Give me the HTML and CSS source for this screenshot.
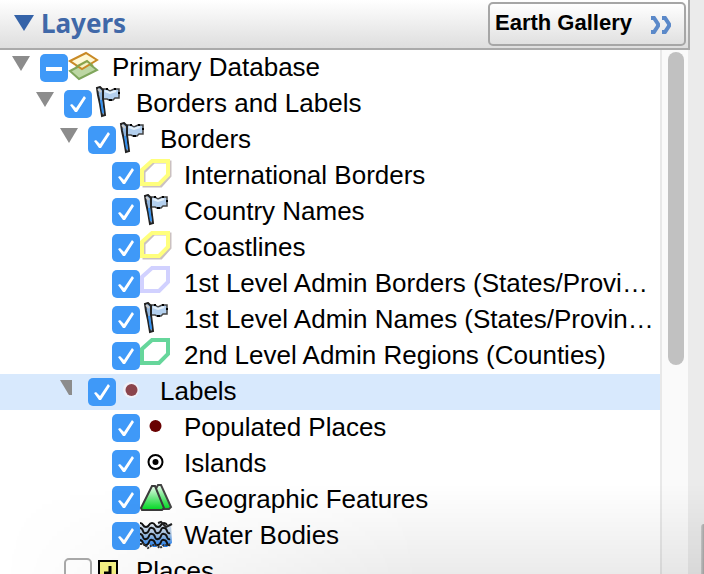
FILE: index.html
```html
<!DOCTYPE html>
<html lang="en">
<head>
<meta charset="utf-8">
<title>Layers</title>
<link rel="stylesheet" href="styles.css">
</head>
<body>
<svg class="defs" aria-hidden="true">
  <symbol id="flag" viewBox="0 0 32 32">
    <path d="M11 3h4l3 2 4-2h5v9h-4l-2 2h-4l-2-1h-4z" fill="#b4d0ee" stroke="#444" stroke-width="1.500"/>
    <path d="M13 5l5 2 6-2" fill="none" stroke="#e4f0fa" stroke-width="2"/>
    <path d="M14 3h2M22 3h2M27 6v2M17 14h3" stroke="#000" stroke-width="2"/>
    <path d="M5 2l3-1 3 3 0 9 2 16-3 1-2-12-2-9z" fill="#8fb4dc" stroke="#222" stroke-width="2"/>
    <path d="M6 3l3 3" stroke="#ccc" stroke-width="2"/>
    <path d="M9 14l2 13" stroke="#3490ee" stroke-width="2"/>
  </symbol>
  <symbol id="area" viewBox="0 0 32 32">
    <path d="M12 2H28V16L19 25H2V11Z" fill="none" stroke="currentColor" stroke-width="4"/>
  </symbol>
  <symbol id="area-shadow" viewBox="0 0 32 32">
    <path d="M14 4H30V18L21 28H4V14Z" fill="none" stroke="#cbc1c1" stroke-width="3"/>
    <path d="M12 3H28V17L19 26H2V12Z" fill="none" stroke="#ffff7d" stroke-width="4"/>
  </symbol>
  <symbol id="dot" viewBox="0 0 32 32"><circle cx="15.500" cy="16" r="6" fill="currentColor"/></symbol>
</svg>
<div class="window">
  <main class="panel">
    <header class="header">
      <h1 class="title"><svg class="title-arrow" viewBox="0 0 20 16" aria-hidden="true"><path d="M0 0H20L10 16Z" fill="#3563a8"/></svg>Layers</h1>
      <button class="gallery" type="button">Earth Gallery
        <svg class="chevrons" viewBox="0 0 22 18" aria-hidden="true"><path d="M1 2h3l4 6v2l-4 6H1M12 2h3l4 6v2l-4 6h-3" fill="none" stroke="#5b89c9" stroke-width="4"/></svg>
      </button>
    </header>
    <div class="content">
      <ul class="tree">
        <li class="row level-0"><button class="toggle" type="button" aria-label="Collapse"></button><input class="check mixed" type="checkbox" id="c0" checked>
          <svg class="icon" viewBox="0 0 32 32"><path d="M2 21L19 12L29 20L11 29Z" fill="#bdd7a4" stroke="#7fa65c" stroke-width="2"/><path d="M2 11L18 3L29 10L14 19Z" fill="#fff8cf" fill-opacity=".85" stroke="#c98a26" stroke-width="2"/><path d="M8 17L19 11L25 16" fill="none" stroke="#8aa24a" stroke-width="2"/></svg>
          <label class="name" for="c0">Primary Database</label></li>
        <li class="row level-1"><button class="toggle" type="button" aria-label="Collapse"></button><input class="check" type="checkbox" id="c1" checked><svg class="icon"><use href="#flag"/></svg><label class="name" for="c1">Borders and Labels</label></li>
        <li class="row level-2"><button class="toggle" type="button" aria-label="Collapse"></button><input class="check" type="checkbox" id="c2" checked><svg class="icon"><use href="#flag"/></svg><label class="name" for="c2">Borders</label></li>
        <li class="row level-3"><input class="check" type="checkbox" id="c3" checked><svg class="icon"><use href="#area-shadow"/></svg><label class="name" for="c3">International Borders</label></li>
        <li class="row level-3"><input class="check" type="checkbox" id="c4" checked><svg class="icon"><use href="#flag"/></svg><label class="name" for="c4">Country Names</label></li>
        <li class="row level-3"><input class="check" type="checkbox" id="c5" checked><svg class="icon"><use href="#area-shadow"/></svg><label class="name" for="c5">Coastlines</label></li>
        <li class="row level-3"><input class="check" type="checkbox" id="c6" checked><svg class="icon lilac"><use href="#area"/></svg><label class="name" for="c6">1st Level Admin Borders (States/Provinces)</label></li>
        <li class="row level-3"><input class="check" type="checkbox" id="c7" checked><svg class="icon"><use href="#flag"/></svg><label class="name" for="c7">1st Level Admin Names (States/Provinces)</label></li>
        <li class="row level-3"><input class="check" type="checkbox" id="c8" checked><svg class="icon green"><use href="#area"/></svg><label class="name" for="c8">2nd Level Admin Regions (Counties)</label></li>
        <li class="row level-2 selected"><button class="toggle turning" type="button" aria-label="Collapse"></button><input class="check" type="checkbox" id="c9" checked><svg class="icon rose" viewBox="0 0 32 32"><circle cx="15" cy="16" r="8" fill="#f0f0f8"/><use href="#dot"/></svg><label class="name" for="c9">Labels</label></li>
        <li class="row level-3"><input class="check" type="checkbox" id="c10" checked><svg class="icon maroon"><use href="#dot"/></svg><label class="name" for="c10">Populated Places</label></li>
        <li class="row level-3"><input class="check" type="checkbox" id="c11" checked><svg class="icon" viewBox="0 0 32 32"><circle cx="15.500" cy="16" r="7" fill="#fff" stroke="#000" stroke-width="2"/><circle cx="15.500" cy="16" r="3" fill="#000"/></svg><label class="name" for="c11">Islands</label></li>
        <li class="row level-3"><input class="check" type="checkbox" id="c12" checked>
          <svg class="icon" viewBox="0 0 32 32"><defs><linearGradient id="hill" x1="0" y1="0" x2="0" y2="1"><stop offset="0" stop-color="#effff0"/><stop offset=".5" stop-color="#6ee783"/><stop offset="1" stop-color="#00db22"/></linearGradient></defs><path d="M13 12L18 3H21L31 25L29 27H18Z" fill="url(#hill)" stroke="#444" stroke-width="2"/><path d="M1 26L12 4H15L24 26L22 28H2Z" fill="url(#hill)" stroke="#3c3c3c" stroke-width="2"/></svg>
          <label class="name" for="c12">Geographic Features</label></li>
        <li class="row level-3"><input class="check" type="checkbox" id="c13" checked>
          <svg class="icon" viewBox="0 0 32 32"><defs><linearGradient id="sea" x1="0" y1="0" x2="0" y2="1"><stop offset="0" stop-color="#dfe6ee"/><stop offset=".45" stop-color="#a9c4e2"/><stop offset="1" stop-color="#1b7cf0"/></linearGradient></defs><path d="M0 6l5 3 5-4 5 3 5-3 6 3 5-3 1 20-5 4h-3l-4-3-4 3h-3l-4-3-3 3H8l-4-4-4-1Z" fill="url(#sea)"/><path d="M0 5q2 0 3 2t3 2q2 0 3-2t3-2q2 0 3 2t3 2q2 0 3-2t3-2q2 0 3 2M0 10q2 0 3 3t3 2q2 0 3-3t3-2q2 0 3 3t3 2q2 0 3-3t3-2q2 0 3 3t3 2M0 16q2 0 3 3t3 2q2 0 3-3t3-2q2 0 3 3t3 2q2 0 3-3t3-2q2 0 3 3t3 2M0 22q2 0 3 3t3 2q2 0 3-3t3-2q2 0 3 3t3 2q2 0 3-3t3-2q2 0 3 3t3 2" fill="none" stroke="#111" stroke-width="2"/><path d="M0 26l4 0 4 4 4-3 4 0 4 3 4-3 4 0 3-1" fill="none" stroke="#333" stroke-width="2" stroke-dasharray="2 1"/><path d="M18 5l3-1 5 5 6-3" fill="none" stroke="#222" stroke-width="2"/></svg>
          <label class="name" for="c13">Water Bodies</label></li>
        <li class="row level-1 leaf"><input class="check" type="checkbox" id="c14">
          <svg class="icon" viewBox="0 0 32 32"><path d="M7 7H25V29H7Z" fill="#f6f485" stroke="#000" stroke-width="2"/><path d="M18 12V19H12" fill="none" stroke="#000" stroke-width="3"/></svg>
          <label class="name" for="c14">Places</label></li>
      </ul>
      <div class="track"><div class="thumb"></div></div>
    </div>
  </main>
</div>
</body>
</html>
```
FILE: styles.css
```css
* { box-sizing: border-box; }

body {
  margin: 0;
  background: #ebebeb;
  color: #000;
  font: 26px/34px "Liberation Sans", Arial, sans-serif;
}

.defs { position: absolute; width: 0; height: 0; }

.window {
  position: relative;
  height: 100vh;
  padding-right: 14px;
  overflow: hidden;
}

/* soft shade along the lower edge of the window */
.window::before {
  content: "";
  position: absolute;
  inset: auto 0 0 0;
  height: 90px;
  background: linear-gradient(to top, rgba(0, 0, 0, .08), transparent);
  mask-image: linear-gradient(to right, transparent, #000 60%);
  pointer-events: none;
  z-index: 1;
}

/* edge of the neighbouring window */
.window::after {
  content: "";
  position: absolute;
  right: 0;
  bottom: 0;
  width: 3px;
  height: 50px;
  border-radius: 3px 0 0 0;
  background: linear-gradient(to right, #ccc, #aaa);
}

.panel { display: flex; flex-direction: column; height: 100%; }

.header {
  display: flex;
  flex: none;
  align-items: flex-start;
  justify-content: space-between;
  height: 50px;
  padding: 2px 0 0 14px;
  border-right: 2px solid #aaa;
  border-bottom: 2px solid #aaa;
  background: linear-gradient(#fff, #dedede);
}

.title {
  display: flex;
  align-items: center;
  gap: 7px;
  margin: 0;
  color: #4068a8;
  font: bold 26px/42px "Noto Sans", "Open Sans", sans-serif;
}

.title-arrow { width: 20px; height: 16px; }

.gallery {
  display: flex;
  align-items: center;
  justify-content: space-between;
  width: 198px;
  height: 44px;
  margin-right: 2px;
  padding: 0 12px 2px 5px;
  border: 2px solid #a6a6a6;
  border-radius: 5px;
  background: linear-gradient(#fff, #e0e0e0);
  color: #000;
  font: bold 22px/26px "Liberation Sans", Arial, sans-serif;
}

.chevrons { width: 22px; height: 18px; margin-top: 4px; }

.content { display: flex; flex: 1; min-height: 0; margin-right: 2px; }

.tree {
  flex: 1;
  min-width: 0;
  margin: 0;
  padding: 0;
  overflow: hidden;
  list-style: none;
  background: #fff;
}

.row {
  display: flex;
  align-items: flex-start;
  height: 36px;
  padding-right: 4px;
}

.level-0 { padding-left: 12px; }
.level-1 { padding-left: 36px; }
.level-2 { padding-left: 60px; }
.level-3 { padding-left: 112px; }
.leaf { padding-left: 64px; }
.selected { background: #d8e9fd; }

.toggle {
  flex: none;
  width: 18px;
  height: 15px;
  margin: 6px 10px 0 0;
  padding: 0;
  border: 0;
  background: #8c8c8c;
  clip-path: polygon(0 0, 100% 0, 50% 100%);
}

.turning { clip-path: polygon(0 0, 12px 0, 12px 100%, 9px 100%); }

.check {
  display: grid;
  flex: none;
  appearance: none;
  width: 28px;
  height: 28px;
  margin: 4px 0 0;
  border: 2px solid #aaa;
  border-radius: 5px;
  background: #fff;
}

.check:checked { border: 0; background: #3f99f8; }

.check:checked::before {
  content: "";
  background: #fff;
  clip-path: polygon(6px 15px, 8px 14px, 12px 18px, 20px 6px, 22px 8px, 13px 22px, 11px 22px);
}

.mixed:checked::before { clip-path: inset(13px 6px 11px 6px); }

.icon { flex: none; width: 32px; height: 32px; overflow: visible; }
.lilac { color: #d1d1ff; }
.green { color: #66d69b; }
.rose { color: #8b444c; }
.maroon { color: #690000; }

.name {
  flex: 1;
  min-width: 0;
  margin-left: 12px;
  overflow: hidden;
  white-space: nowrap;
  text-overflow: ellipsis;
}

.track {
  flex: none;
  width: 28px;
  padding: 2px 4px 0 6px;
  border-left: 2px solid #e8e8e8;
  background: #fafafa;
}

.thumb { height: 60%; border-radius: 8px; background: #c1c1c1; }
```
